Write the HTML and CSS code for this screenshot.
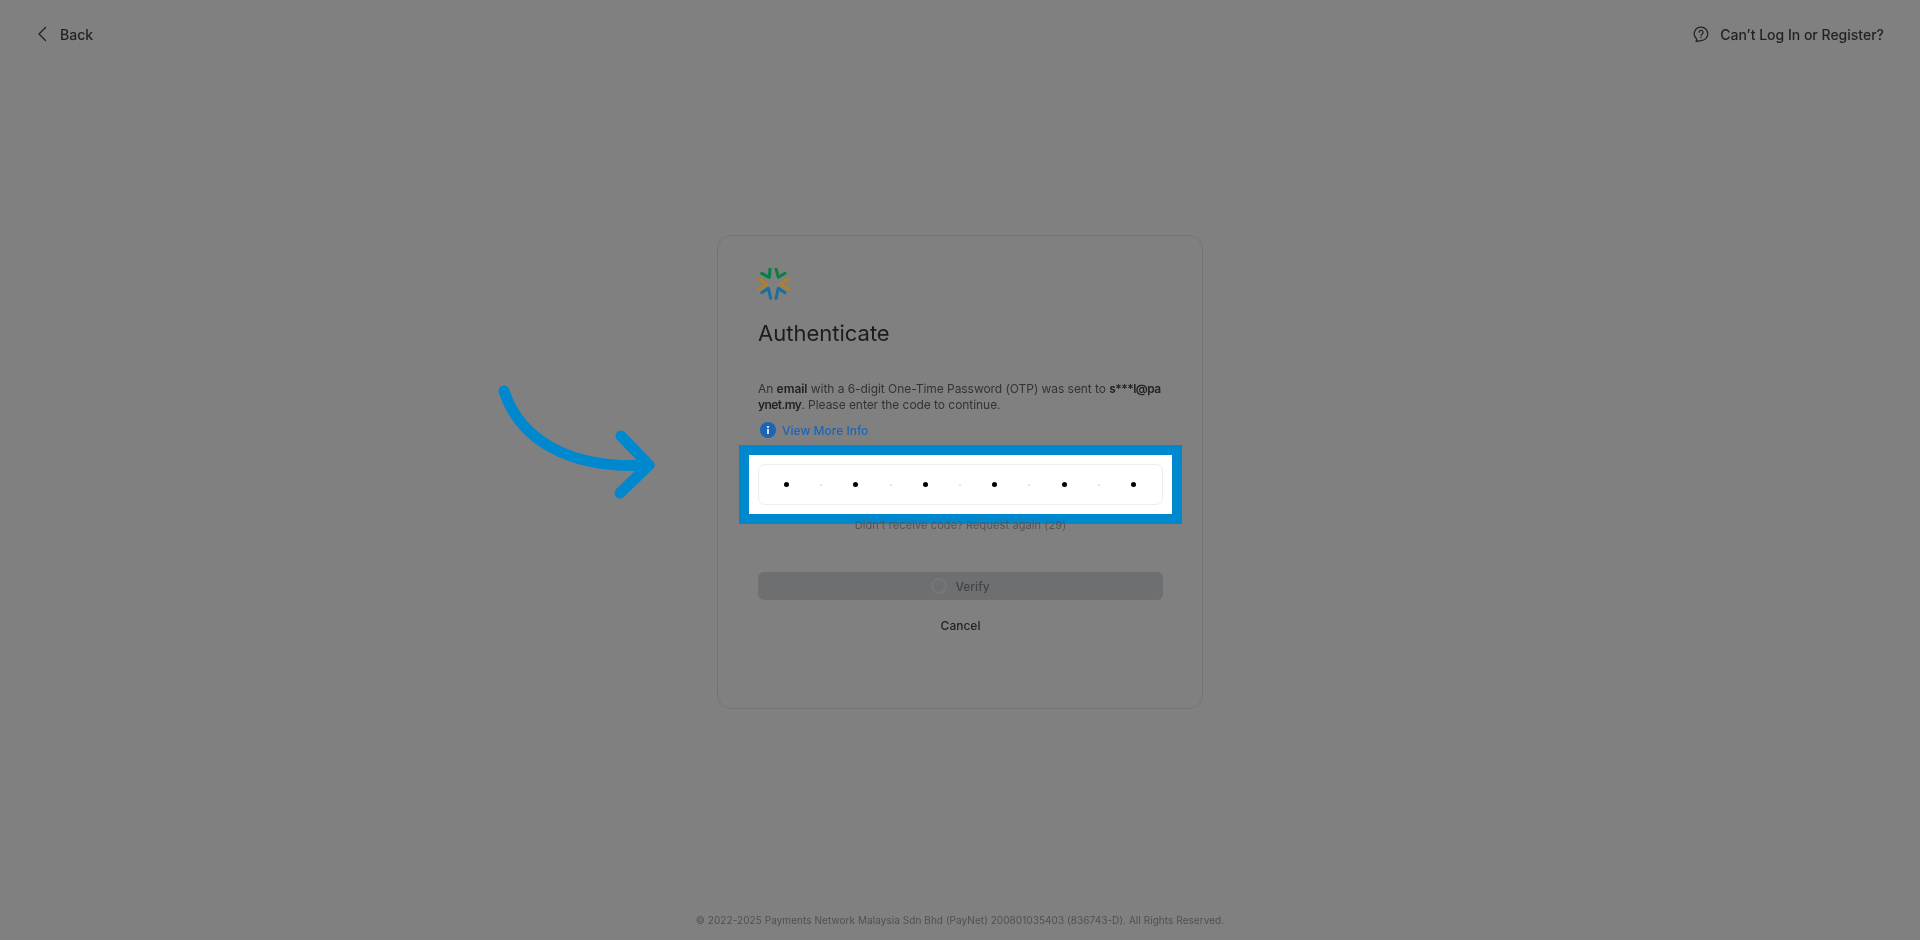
FILE: index.html
```html
<!DOCTYPE html>
<html lang="en">
<head>
    <meta charset="UTF-8">
    <meta name="viewport" content="width=device-width, initial-scale=1.0">
    <title>Authenticate</title>
    <link rel="stylesheet" href="styles.css">
</head>

<body>
    <div class="page">
        <header class="topbar">
            <a class="top-link">
                <svg class="back-icon" viewBox="0 0 10 16" width="10" height="16">
                    <path d="M9.5 1.5 3 8l6.5 6.5" fill="none" stroke="#222" stroke-width="1.4" stroke-linecap="round" stroke-linejoin="round"/>
                </svg>
                Back
            </a>
            <a class="top-link help-link">
                <svg viewBox="0 0 18 18" width="16" height="16">
                    <path d="M9 1.2a7.6 7.6 0 0 1 0 15.2c-1.5 0-3.6.6-5.6 1.1.6-1 .9-2 .7-2.9A7.6 7.6 0 0 1 9 1.2Z" fill="none" stroke="#222" stroke-width="1.4" stroke-linejoin="round"/>
                    <path d="M6.9 7a2.2 2.2 0 1 1 3.4 1.9c-.8.5-1.3 1-1.3 1.9" fill="none" stroke="#222" stroke-width="1.4" stroke-linecap="round"/>
                    <circle cx="9" cy="12.9" r=".8" fill="#222"/>
                </svg>
                Can&rsquo;t Log In or Register?
            </a>
        </header>

        <main class="main">
            <div class="card">
                <svg class="logo" viewBox="0 0 32 32" width="32" height="32" fill="none" stroke-width="3" stroke-linecap="round" stroke-linejoin="round">
                    <path d="M3.7 5.3l7.6 4L12 .3M27 5.3l-6.7 4L18 .3" stroke="#0a7f45"/>
                    <path d="M1 11l7.7 5L1 21.3M30.3 11l-7.6 5 7.6 5.3" stroke="#b08029"/>
                    <path d="M3.7 24.7l6.6-4.4 2.4 10M27 24.7l-6.7-4.4-2.3 10" stroke="#1b6f9e"/>
                </svg>
                <h1>Authenticate</h1>
                <p class="message">An <b>email</b> with a 6-digit One-Time Password (OTP) was sent to <b class="address">s***l@paynet.my</b>. Please enter the code to continue.</p>
                <a class="more-info">
                    <svg viewBox="0 0 16 16" width="16" height="16">
                        <circle cx="8" cy="8" r="8" fill="#1c64b4"/>
                        <rect x="7" y="7" width="2" height="5" fill="#ddd"/>
                        <rect x="7" y="4" width="2" height="2" fill="#ddd"/>
                    </svg>
                    View More Info
                </a>
                <div class="otp">
                    <span class="dot"></span><span class="sep"></span>
                    <span class="dot"></span><span class="sep"></span>
                    <span class="dot"></span><span class="sep"></span>
                    <span class="dot"></span><span class="sep"></span>
                    <span class="dot"></span><span class="sep"></span>
                    <span class="dot"></span>
                </div>
                <p class="resend">Didn&rsquo;t receive code? Request again (29)</p>
                <button class="verify" type="button"><span class="spinner"></span>Verify</button>
                <a class="cancel">Cancel</a>
            </div>
        </main>

        <footer class="footer">&copy; 2022-2025 Payments Network Malaysia Sdn Bhd (PayNet) 200801035403 (836743-D). All Rights Reserved.</footer>

        <svg class="arrow" viewBox="0 0 170 130" width="170" height="130" fill="none" stroke="#0088cf" stroke-width="11" stroke-linecap="round" stroke-linejoin="round">
            <path d="M14 11C30 60 80 90 159 85"/>
            <path d="M131 56l28 29-29 28"/>
        </svg>
    </div>
</body>

</html>
```

FILE: styles.css
```css
body {
    margin: 0;
    background-color: #808080;
    font-family: Inter, 'Noto Sans', sans-serif;
    color: #222;
}

.page {
    position: relative;
    height: 940px;
    overflow: hidden;
    display: flex;
    flex-direction: column;
    filter: blur(0.5px);
}

.topbar {
    height: 68px;
    padding: 0 36px;
    display: flex;
    justify-content: space-between;
    align-items: center;
}

.top-link {
    display: flex;
    align-items: center;
    gap: 10px;
    font-size: 14px;
    font-weight: 500;
}

.help-link {
    gap: 11px;
}

.back-icon {
    margin-right: 4px;
}

.main {
    flex: 1;
    display: flex;
    justify-content: center;
    align-items: center;
}

.card {
    width: 486px;
    height: 474px;
    box-sizing: border-box;
    padding: 32px 39px 32px 40px;
    border: 1px solid #737373;
    border-radius: 14px;
    display: flex;
    flex-direction: column;
}

.logo {
    flex-shrink: 0;
}

h1 {
    margin: 18px 0 0;
    font-size: 22px;
    line-height: 30px;
    font-weight: 400;
    color: #1c1c1e;
}

.message {
    margin: 33px 0 0;
    font-size: 12px;
    letter-spacing: -0.05px;
    line-height: 16px;
    color: #333;
}

.message b {
    font-weight: 600;
    color: #222;
}

.message .address {
    word-break: break-all;
    letter-spacing: -0.55px;
}

.more-info {
    margin: 9px 0 0 2px;
    display: flex;
    align-items: center;
    gap: 6px;
    font-size: 12px;
    font-weight: 500;
    color: #1c64b4;
}

/* the white box and blue frame sit over the card */
.otp {
    position: relative;
    height: 41px;
    margin-top: 26px;
    padding: 0 26px 0 25px;
    box-sizing: border-box;
    border: 1px solid #eee;
    border-radius: 7px;
    background-color: white;
    display: flex;
    justify-content: space-between;
    align-items: center;
}

.otp::before {
    content: "";
    position: absolute;
    inset: -20px;
    z-index: -1;
    background-color: white;
    border: 10px solid #0088cf;
}

.dot {
    width: 5px;
    height: 5px;
    margin-top: -1px;
    border-radius: 50%;
    background-color: #000;
}

.sep {
    width: 2px;
    height: 2px;
    border-radius: 50%;
    background-color: #ddd;
}

.resend {
    margin: 12px 0 0;
    height: 16px;
    text-align: center;
    font-size: 11px;
    letter-spacing: 0.1px;
    line-height: 16px;
    color: #555;
}

.verify {
    margin-top: 39px;
    height: 28px;
    padding: 0;
    border: none;
    border-radius: 6px;
    background-color: #6e6f71;
    color: #444;
    font-family: inherit;
    font-size: 12px;
    font-weight: 500;
    display: flex;
    justify-content: center;
    align-items: center;
    gap: 8px;
}

.spinner {
    width: 12px;
    height: 12px;
    border: 2px solid #767779;
    border-radius: 50%;
}

.cancel {
    margin-top: 18px;
    text-align: center;
    font-size: 12px;
    font-weight: 500;
    color: #222;
}

.footer {
    height: 64px;
    box-sizing: border-box;
    padding-top: 36px;
    text-align: center;
    font-size: 10px;
    letter-spacing: 0.06px;
    line-height: 16px;
    color: #505050;
}

.arrow {
    position: absolute;
    left: 490px;
    top: 380px;
}
```
